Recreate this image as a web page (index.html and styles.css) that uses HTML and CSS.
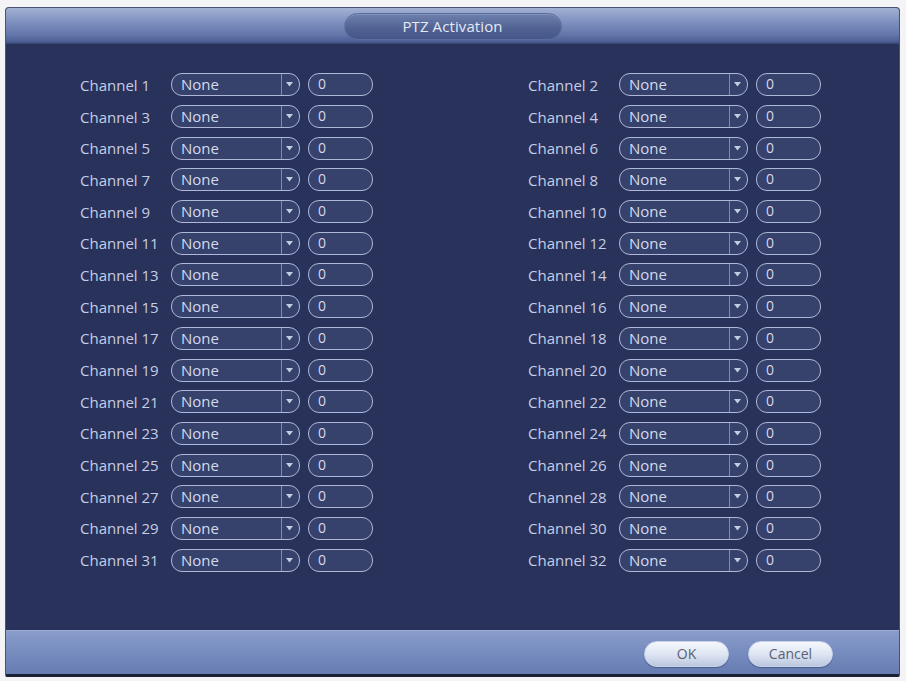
FILE: index.html
```html
<!DOCTYPE html>
<html lang="en">
<head>
<meta charset="utf-8">
<title>PTZ Activation</title>
<link rel="stylesheet" href="styles.css">
</head>
<body>
<div class="window">
  <div class="header">
    <div class="title">PTZ Activation</div>
  </div>
  <div class="content">
    <div class="grid" id="grid">
      <div class="row"><span class="label">Channel 1</span><div class="select"><span class="sel-text">None</span><span class="sel-arrow"><svg width="7" height="5" viewBox="0 0 7 5"><path d="M0 0h7L3.5 4.5z" fill="#c4cce4"/></svg></span></div><div class="num">0</div></div>
      <div class="row"><span class="label">Channel 2</span><div class="select"><span class="sel-text">None</span><span class="sel-arrow"><svg width="7" height="5" viewBox="0 0 7 5"><path d="M0 0h7L3.5 4.5z" fill="#c4cce4"/></svg></span></div><div class="num">0</div></div>
      <div class="row"><span class="label">Channel 3</span><div class="select"><span class="sel-text">None</span><span class="sel-arrow"><svg width="7" height="5" viewBox="0 0 7 5"><path d="M0 0h7L3.5 4.5z" fill="#c4cce4"/></svg></span></div><div class="num">0</div></div>
      <div class="row"><span class="label">Channel 4</span><div class="select"><span class="sel-text">None</span><span class="sel-arrow"><svg width="7" height="5" viewBox="0 0 7 5"><path d="M0 0h7L3.5 4.5z" fill="#c4cce4"/></svg></span></div><div class="num">0</div></div>
      <div class="row"><span class="label">Channel 5</span><div class="select"><span class="sel-text">None</span><span class="sel-arrow"><svg width="7" height="5" viewBox="0 0 7 5"><path d="M0 0h7L3.5 4.5z" fill="#c4cce4"/></svg></span></div><div class="num">0</div></div>
      <div class="row"><span class="label">Channel 6</span><div class="select"><span class="sel-text">None</span><span class="sel-arrow"><svg width="7" height="5" viewBox="0 0 7 5"><path d="M0 0h7L3.5 4.5z" fill="#c4cce4"/></svg></span></div><div class="num">0</div></div>
      <div class="row"><span class="label">Channel 7</span><div class="select"><span class="sel-text">None</span><span class="sel-arrow"><svg width="7" height="5" viewBox="0 0 7 5"><path d="M0 0h7L3.5 4.5z" fill="#c4cce4"/></svg></span></div><div class="num">0</div></div>
      <div class="row"><span class="label">Channel 8</span><div class="select"><span class="sel-text">None</span><span class="sel-arrow"><svg width="7" height="5" viewBox="0 0 7 5"><path d="M0 0h7L3.5 4.5z" fill="#c4cce4"/></svg></span></div><div class="num">0</div></div>
      <div class="row"><span class="label">Channel 9</span><div class="select"><span class="sel-text">None</span><span class="sel-arrow"><svg width="7" height="5" viewBox="0 0 7 5"><path d="M0 0h7L3.5 4.5z" fill="#c4cce4"/></svg></span></div><div class="num">0</div></div>
      <div class="row"><span class="label">Channel 10</span><div class="select"><span class="sel-text">None</span><span class="sel-arrow"><svg width="7" height="5" viewBox="0 0 7 5"><path d="M0 0h7L3.5 4.5z" fill="#c4cce4"/></svg></span></div><div class="num">0</div></div>
      <div class="row"><span class="label">Channel 11</span><div class="select"><span class="sel-text">None</span><span class="sel-arrow"><svg width="7" height="5" viewBox="0 0 7 5"><path d="M0 0h7L3.5 4.5z" fill="#c4cce4"/></svg></span></div><div class="num">0</div></div>
      <div class="row"><span class="label">Channel 12</span><div class="select"><span class="sel-text">None</span><span class="sel-arrow"><svg width="7" height="5" viewBox="0 0 7 5"><path d="M0 0h7L3.5 4.5z" fill="#c4cce4"/></svg></span></div><div class="num">0</div></div>
      <div class="row"><span class="label">Channel 13</span><div class="select"><span class="sel-text">None</span><span class="sel-arrow"><svg width="7" height="5" viewBox="0 0 7 5"><path d="M0 0h7L3.5 4.5z" fill="#c4cce4"/></svg></span></div><div class="num">0</div></div>
      <div class="row"><span class="label">Channel 14</span><div class="select"><span class="sel-text">None</span><span class="sel-arrow"><svg width="7" height="5" viewBox="0 0 7 5"><path d="M0 0h7L3.5 4.5z" fill="#c4cce4"/></svg></span></div><div class="num">0</div></div>
      <div class="row"><span class="label">Channel 15</span><div class="select"><span class="sel-text">None</span><span class="sel-arrow"><svg width="7" height="5" viewBox="0 0 7 5"><path d="M0 0h7L3.5 4.5z" fill="#c4cce4"/></svg></span></div><div class="num">0</div></div>
      <div class="row"><span class="label">Channel 16</span><div class="select"><span class="sel-text">None</span><span class="sel-arrow"><svg width="7" height="5" viewBox="0 0 7 5"><path d="M0 0h7L3.5 4.5z" fill="#c4cce4"/></svg></span></div><div class="num">0</div></div>
      <div class="row"><span class="label">Channel 17</span><div class="select"><span class="sel-text">None</span><span class="sel-arrow"><svg width="7" height="5" viewBox="0 0 7 5"><path d="M0 0h7L3.5 4.5z" fill="#c4cce4"/></svg></span></div><div class="num">0</div></div>
      <div class="row"><span class="label">Channel 18</span><div class="select"><span class="sel-text">None</span><span class="sel-arrow"><svg width="7" height="5" viewBox="0 0 7 5"><path d="M0 0h7L3.5 4.5z" fill="#c4cce4"/></svg></span></div><div class="num">0</div></div>
      <div class="row"><span class="label">Channel 19</span><div class="select"><span class="sel-text">None</span><span class="sel-arrow"><svg width="7" height="5" viewBox="0 0 7 5"><path d="M0 0h7L3.5 4.5z" fill="#c4cce4"/></svg></span></div><div class="num">0</div></div>
      <div class="row"><span class="label">Channel 20</span><div class="select"><span class="sel-text">None</span><span class="sel-arrow"><svg width="7" height="5" viewBox="0 0 7 5"><path d="M0 0h7L3.5 4.5z" fill="#c4cce4"/></svg></span></div><div class="num">0</div></div>
      <div class="row"><span class="label">Channel 21</span><div class="select"><span class="sel-text">None</span><span class="sel-arrow"><svg width="7" height="5" viewBox="0 0 7 5"><path d="M0 0h7L3.5 4.5z" fill="#c4cce4"/></svg></span></div><div class="num">0</div></div>
      <div class="row"><span class="label">Channel 22</span><div class="select"><span class="sel-text">None</span><span class="sel-arrow"><svg width="7" height="5" viewBox="0 0 7 5"><path d="M0 0h7L3.5 4.5z" fill="#c4cce4"/></svg></span></div><div class="num">0</div></div>
      <div class="row"><span class="label">Channel 23</span><div class="select"><span class="sel-text">None</span><span class="sel-arrow"><svg width="7" height="5" viewBox="0 0 7 5"><path d="M0 0h7L3.5 4.5z" fill="#c4cce4"/></svg></span></div><div class="num">0</div></div>
      <div class="row"><span class="label">Channel 24</span><div class="select"><span class="sel-text">None</span><span class="sel-arrow"><svg width="7" height="5" viewBox="0 0 7 5"><path d="M0 0h7L3.5 4.5z" fill="#c4cce4"/></svg></span></div><div class="num">0</div></div>
      <div class="row"><span class="label">Channel 25</span><div class="select"><span class="sel-text">None</span><span class="sel-arrow"><svg width="7" height="5" viewBox="0 0 7 5"><path d="M0 0h7L3.5 4.5z" fill="#c4cce4"/></svg></span></div><div class="num">0</div></div>
      <div class="row"><span class="label">Channel 26</span><div class="select"><span class="sel-text">None</span><span class="sel-arrow"><svg width="7" height="5" viewBox="0 0 7 5"><path d="M0 0h7L3.5 4.5z" fill="#c4cce4"/></svg></span></div><div class="num">0</div></div>
      <div class="row"><span class="label">Channel 27</span><div class="select"><span class="sel-text">None</span><span class="sel-arrow"><svg width="7" height="5" viewBox="0 0 7 5"><path d="M0 0h7L3.5 4.5z" fill="#c4cce4"/></svg></span></div><div class="num">0</div></div>
      <div class="row"><span class="label">Channel 28</span><div class="select"><span class="sel-text">None</span><span class="sel-arrow"><svg width="7" height="5" viewBox="0 0 7 5"><path d="M0 0h7L3.5 4.5z" fill="#c4cce4"/></svg></span></div><div class="num">0</div></div>
      <div class="row"><span class="label">Channel 29</span><div class="select"><span class="sel-text">None</span><span class="sel-arrow"><svg width="7" height="5" viewBox="0 0 7 5"><path d="M0 0h7L3.5 4.5z" fill="#c4cce4"/></svg></span></div><div class="num">0</div></div>
      <div class="row"><span class="label">Channel 30</span><div class="select"><span class="sel-text">None</span><span class="sel-arrow"><svg width="7" height="5" viewBox="0 0 7 5"><path d="M0 0h7L3.5 4.5z" fill="#c4cce4"/></svg></span></div><div class="num">0</div></div>
      <div class="row"><span class="label">Channel 31</span><div class="select"><span class="sel-text">None</span><span class="sel-arrow"><svg width="7" height="5" viewBox="0 0 7 5"><path d="M0 0h7L3.5 4.5z" fill="#c4cce4"/></svg></span></div><div class="num">0</div></div>
      <div class="row"><span class="label">Channel 32</span><div class="select"><span class="sel-text">None</span><span class="sel-arrow"><svg width="7" height="5" viewBox="0 0 7 5"><path d="M0 0h7L3.5 4.5z" fill="#c4cce4"/></svg></span></div><div class="num">0</div></div>
    </div>
  </div>
  <div class="footer">
    <button class="btn">OK</button>
    <button class="btn">Cancel</button>
  </div>
</div>
</body>
</html>
```

FILE: styles.css
```css
html, body {
  margin: 0;
  padding: 0;
  background: #f4f4f6;
}

body {
  font-family: "Open Sans", "DejaVu Sans", sans-serif;
  width: 906px;
  height: 681px;
  overflow: hidden;
}

.window {
  margin: 7px 0 0 5px;
  width: 895px;
  height: 670px;
  box-sizing: border-box;
  border: 1px solid #4a5274;
  border-bottom: 3px solid #1c2034;
  border-radius: 4px 4px 2px 2px;
  background: #29325a;
  display: flex;
  flex-direction: column;
  overflow: hidden;
}

.header {
  height: 36px;
  flex: none;
  display: flex;
  justify-content: center;
  align-items: center;
  background: linear-gradient(#a2b1d3 0%, #8193c0 35%, #6276ab 75%, #4c5e92 94%, #33406c 100%);
}

.title {
  width: 218px;
  height: 27px;
  box-sizing: border-box;
  border-radius: 14px;
  background: linear-gradient(#6e80ad, #4f6191 60%, #45568a);
  border: 1px solid #5d6e9c;
  box-shadow: inset 0 1px 0 rgba(255,255,255,0.15);
  display: flex;
  justify-content: center;
  align-items: center;
  color: #e4e9f6;
  font-size: 15px;
  letter-spacing: 0.1px;
}

.content {
  flex: 1;
  padding: 25px 0 0 74px;
}

.grid {
  display: grid;
  grid-template-columns: 448px 300px;
  grid-auto-rows: 31.7px;
}

.row {
  display: flex;
  align-items: center;
}

.label {
  width: 91px;
  flex: none;
  color: #c6cde6;
  font-size: 15px;
  white-space: nowrap;
}

.select {
  width: 129px;
  height: 23px;
  box-sizing: border-box;
  border: 1.5px solid #aeb8d8;
  border-radius: 11px;
  background: #36416c;
  display: flex;
  align-items: stretch;
  flex: none;
}

.sel-text {
  flex: 1;
  color: #d4daee;
  font-size: 15px;
  line-height: 20px;
  padding-left: 9px;
}

.sel-arrow {
  width: 15px;
  border-left: 1px solid #7f8ab2;
  display: flex;
  align-items: center;
  justify-content: center;
  padding-right: 2px;
}

.num {
  margin-left: 8px;
  width: 65px;
  height: 23px;
  box-sizing: border-box;
  border: 1.5px solid #aeb8d8;
  border-radius: 11px;
  background: #36416c;
  color: #d4daee;
  font-size: 14px;
  line-height: 20px;
  padding-left: 9px;
  flex: none;
}

.footer {
  height: 44px;
  flex: none;
  display: flex;
  justify-content: flex-end;
  align-items: center;
  gap: 19px;
  padding: 2px 66px 0 0;
  box-sizing: border-box;
  background: linear-gradient(#8a9dca 0%, #7a8fc1 40%, #667cb2 100%);
  border-top: 1px solid #9aabd2;
}

.btn {
  width: 85px;
  height: 26px;
  border: 1px solid #c8d2e8;
  border-radius: 13px;
  background: linear-gradient(#f4f7fc 0%, #dfe6f3 50%, #bcc8e0 100%);
  color: #5a6072;
  font-family: "Open Sans", "DejaVu Sans", sans-serif;
  font-size: 14px;
  padding: 0;
  box-shadow: 0 1px 1px rgba(30,40,80,0.4);
}
```
